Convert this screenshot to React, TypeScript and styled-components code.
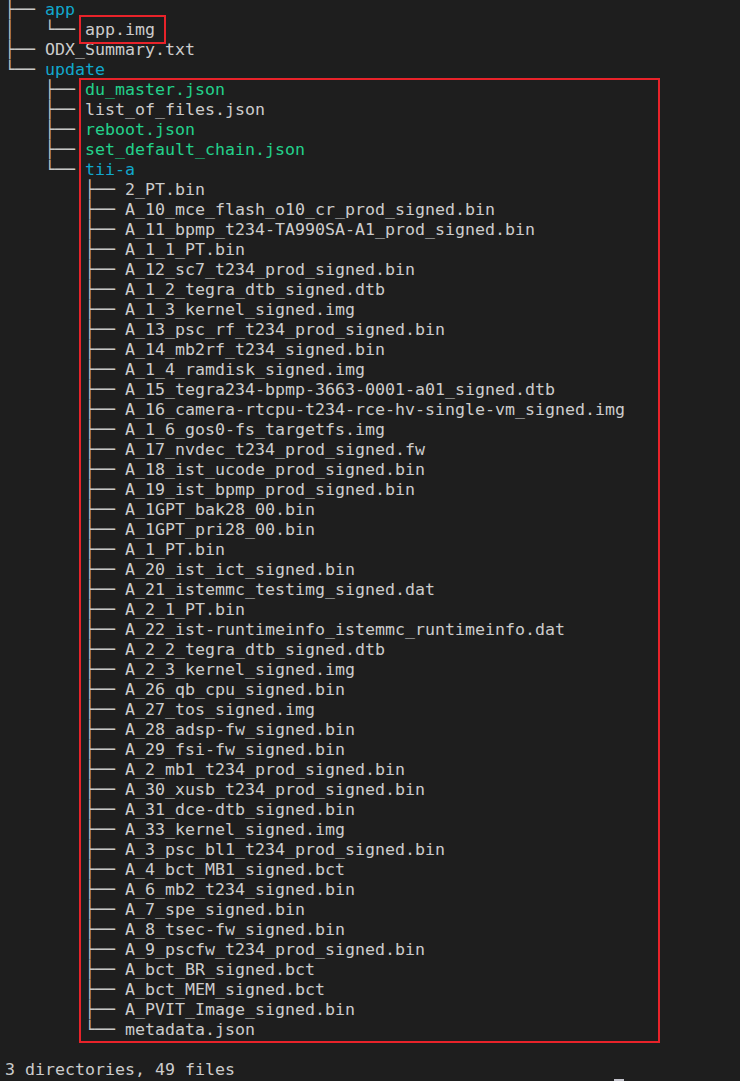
import React from "react";
import styled, { createGlobalStyle } from "styled-components";

const Global = createGlobalStyle`
  html, body {
    margin: 0;
    padding: 0;
    background: #1e1e1e;
  }
  #root {
    min-height: 1081px;
  }
`;

const Terminal = styled.div`
  position: relative;
  box-sizing: border-box;
  width: 740px;
  height: 1081px;
  overflow: hidden;
  background: #1e1e1e;
  padding: 0 0 0 5px;
  display: flex;
  flex-direction: column;
  font-family: "DejaVu Sans Mono", "Liberation Mono", monospace;
  font-size: 16.61px;
  line-height: 20px;
  color: #cccccc;
`;

const Listing = styled.div`
  display: flex;
  flex-direction: column;
`;

const Row = styled.div`
  height: 20px;
  flex: none;
  white-space: pre;
`;

const Summary = styled(Row)`
  margin-top: 20px;
`;

const Tree = styled.span`
  color: #c8c8c8;
`;

type Kind = "dir" | "exec" | "file";

const Name = styled.span<{ $kind: Kind }>`
  color: ${(p) =>
    p.$kind === "dir" ? "#11a8cd" : p.$kind === "exec" ? "#23d18b" : "#cccccc"};
`;

const Mark = styled.div<{ $x: number; $y: number; $w: number; $h: number }>`
  position: absolute;
  left: ${(p) => p.$x}px;
  top: ${(p) => p.$y}px;
  width: ${(p) => p.$w}px;
  height: ${(p) => p.$h}px;
  box-sizing: border-box;
  border: 2px solid #e8232a;
  pointer-events: none;
`;

const Cursor = styled.div`
  position: absolute;
  left: 614px;
  top: 1079px;
  width: 10px;
  height: 2px;
  background: #c4c4cc;
`;

const tiiFiles = [
  "2_PT.bin",
  "A_10_mce_flash_o10_cr_prod_signed.bin",
  "A_11_bpmp_t234-TA990SA-A1_prod_signed.bin",
  "A_1_1_PT.bin",
  "A_12_sc7_t234_prod_signed.bin",
  "A_1_2_tegra_dtb_signed.dtb",
  "A_1_3_kernel_signed.img",
  "A_13_psc_rf_t234_prod_signed.bin",
  "A_14_mb2rf_t234_signed.bin",
  "A_1_4_ramdisk_signed.img",
  "A_15_tegra234-bpmp-3663-0001-a01_signed.dtb",
  "A_16_camera-rtcpu-t234-rce-hv-single-vm_signed.img",
  "A_1_6_gos0-fs_targetfs.img",
  "A_17_nvdec_t234_prod_signed.fw",
  "A_18_ist_ucode_prod_signed.bin",
  "A_19_ist_bpmp_prod_signed.bin",
  "A_1GPT_bak28_00.bin",
  "A_1GPT_pri28_00.bin",
  "A_1_PT.bin",
  "A_20_ist_ict_signed.bin",
  "A_21_istemmc_testimg_signed.dat",
  "A_2_1_PT.bin",
  "A_22_ist-runtimeinfo_istemmc_runtimeinfo.dat",
  "A_2_2_tegra_dtb_signed.dtb",
  "A_2_3_kernel_signed.img",
  "A_26_qb_cpu_signed.bin",
  "A_27_tos_signed.img",
  "A_28_adsp-fw_signed.bin",
  "A_29_fsi-fw_signed.bin",
  "A_2_mb1_t234_prod_signed.bin",
  "A_30_xusb_t234_prod_signed.bin",
  "A_31_dce-dtb_signed.bin",
  "A_33_kernel_signed.img",
  "A_3_psc_bl1_t234_prod_signed.bin",
  "A_4_bct_MB1_signed.bct",
  "A_6_mb2_t234_signed.bin",
  "A_7_spe_signed.bin",
  "A_8_tsec-fw_signed.bin",
  "A_9_pscfw_t234_prod_signed.bin",
  "A_bct_BR_signed.bct",
  "A_bct_MEM_signed.bct",
  "A_PVIT_Image_signed.bin",
  "metadata.json",
];

type Entry = { prefix: string; name: string; kind: Kind };

const entries: Entry[] = [
  { prefix: "├── ", name: "app", kind: "dir" },
  { prefix: "│   └── ", name: "app.img", kind: "file" },
  { prefix: "├── ", name: "ODX_Summary.txt", kind: "file" },
  { prefix: "└── ", name: "update", kind: "dir" },
  { prefix: "    ├── ", name: "du_master.json", kind: "exec" },
  { prefix: "    ├── ", name: "list_of_files.json", kind: "file" },
  { prefix: "    ├── ", name: "reboot.json", kind: "exec" },
  { prefix: "    ├── ", name: "set_default_chain.json", kind: "exec" },
  { prefix: "    └── ", name: "tii-a", kind: "dir" },
  ...tiiFiles.map((f, i) => ({
    prefix: i === tiiFiles.length - 1 ? "        └── " : "        ├── ",
    name: f,
    kind: "file" as Kind,
  })),
];

export default function App() {
  return (
    <>
      <Global />
      <Terminal>
        <Listing>
          {entries.map((e, i) => (
            <Row key={i}>
              <Tree>{e.prefix}</Tree>
              <Name $kind={e.kind}>{e.name}</Name>
            </Row>
          ))}
        </Listing>
        <Summary>3 directories, 49 files</Summary>
        <Mark $x={79} $y={15} $w={87} $h={29} />
        <Mark $x={79} $y={78} $w={581} $h={965} />
        <Cursor />
      </Terminal>
    </>
  );
}
